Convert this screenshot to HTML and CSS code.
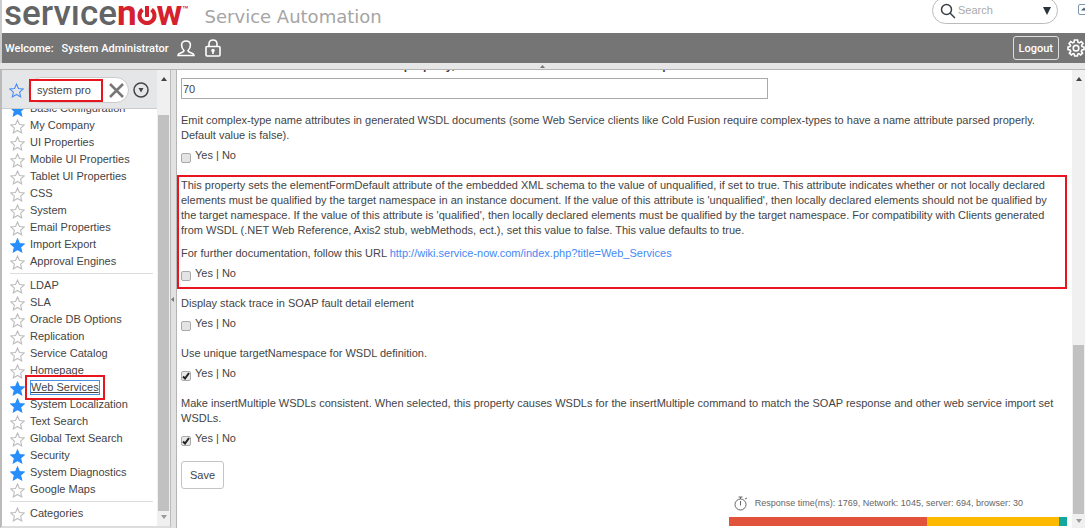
FILE: index.html
```
<!DOCTYPE html>
<html lang="en">
<head>
    <meta charset="UTF-8">
    <meta name="viewport" content="width=device-width, initial-scale=1.0">
    <title>ServiceNow</title>
    <link rel="stylesheet" href="styles.css">
</head>
<body>
    <svg class="defs" width="0" height="0">
        <symbol id="star" viewBox="0 0 14 14">
            <path d="M7 1 L8.8 5.2 L13.3 5.6 L9.9 8.6 L10.9 13 L7 10.7 L3.1 13 L4.1 8.6 L0.7 5.6 L5.2 5.2 Z"/>
        </symbol>
    </svg>

    <header class="banner">
        <div class="logo">servıce<b>n</b><svg class="power" viewBox="0 0 20 20"><path d="M5.500 3.600 A7.500 7.500 0 1 0 14.500 3.600 M10 0 V11"/></svg><b>w</b><small>™</small></div>
        <div class="tagline">Service Automation</div>
        <div class="search">
            <svg width="16" height="16" viewBox="0 0 16 16"><circle cx="6.5" cy="6.5" r="5"/><path d="M10 10 L15 15"/></svg>
            <input type="text" placeholder="Search" aria-label="Search">
            <button class="plain" aria-label="Search options"><svg width="8" height="8" viewBox="0 0 8 8"><path d="M0 0 H8 L4 8 Z"/></svg></button>
        </div>
        <button class="plain collapse" aria-label="Collapse banner"><svg width="7" height="11" viewBox="0 0 7 11"><path d="M7 0.5 H2 Q0.5 0.5 0.5 2 V9 Q0.5 10.5 2 10.5 H7"/><path class="tip" d="M3 6.5 L6 3.5 L7 4.5 V6.5 Z"/></svg></button>
    </header>

    <div class="welcome">
        <span>Welcome:</span>
        <strong>System Administrator</strong>
        <svg width="18" height="17" viewBox="0 0 18 17"><path d="M7 10.5 C4.8 8.6 4.6 6.5 4.6 5 C4.6 2.6 6.4 1 9 1 C11.6 1 13.4 2.6 13.4 5 C13.4 6.5 13.2 8.6 11 10.5 C11 12 12.5 12.4 14.5 13 C16.3 13.6 17 14 17 15.5 H1 C1 14 1.7 13.6 3.5 13 C5.500 12.400 7 12 7 10.500 Z"/></svg>
        <svg width="16" height="18" viewBox="0 0 16 18"><rect x="1" y="7.500" width="14" height="9.500" rx="1"/><path d="M4 7.500 V5 C4 2.500 5.500 1 8 1 C10.500 1 12 2.500 12 5 V7.500 M8 12 V15"/><circle cx="8" cy="11.500" r="1"/></svg>
        <button class="logout">Logout</button>
        <button class="plain gear" aria-label="Settings"><svg width="18" height="18" viewBox="0 0 18 18"><path d="M7.400 1 H10.600 L11 3.300 L12.300 3.900 L14.300 2.600 L16 4.600 L14.600 6.400 L15 7.500 L17 8 V10.500 L14.900 11 L14.300 12.300 L15.600 14.200 L13.700 15.900 L11.900 14.600 L10.800 15 L10.400 17 H7.600 L7.200 15 L6.100 14.600 L4.300 15.900 L2.400 14.200 L3.700 12.300 L3.100 11 L1 10.500 V8 L3 7.500 L3.500 6.400 L2.100 4.600 L3.800 2.600 L5.800 3.900 L7 3.300 Z"/><circle cx="9" cy="9.200" r="2.800"/></svg></button>
    </div>

    <div class="split-row"><svg width="5" height="3" viewBox="0 0 5 3"><path d="M0 3 L2.500 0 L5 3 Z"/></svg></div>

    <div class="workspace">
        <nav class="navigator">
            <div class="nav-body">
                <div class="filter">
                    <svg class="star outline-blue"><use href="#star"/></svg>
                    <div class="filter-box">
                        <input class="marked" type="text" value="system pro" aria-label="Filter navigator">
                        <button class="plain" aria-label="Clear filter"><svg width="15" height="15" viewBox="0 0 15 15"><path d="M1 1 L14 14 M14 1 L1 14"/></svg></button>
                    </div>
                    <button class="plain round" aria-label="Filter options"><svg width="16" height="16" viewBox="0 0 16 16"><circle cx="8" cy="8" r="7"/><path d="M5.500 6 H10.500 L8 10.500 Z"/></svg></button>
                </div>
                <div class="list">
                    <ul class="first">
                        <li><svg class="star on"><use href="#star"/></svg><a href="#">Basic Configuration</a></li>
                        <li><svg class="star"><use href="#star"/></svg><a href="#">My Company</a></li>
                        <li><svg class="star"><use href="#star"/></svg><a href="#">UI Properties</a></li>
                        <li><svg class="star"><use href="#star"/></svg><a href="#">Mobile UI Properties</a></li>
                        <li><svg class="star"><use href="#star"/></svg><a href="#">Tablet UI Properties</a></li>
                        <li><svg class="star"><use href="#star"/></svg><a href="#">CSS</a></li>
                        <li><svg class="star"><use href="#star"/></svg><a href="#">System</a></li>
                        <li><svg class="star"><use href="#star"/></svg><a href="#">Email Properties</a></li>
                        <li><svg class="star on"><use href="#star"/></svg><a href="#">Import Export</a></li>
                        <li><svg class="star"><use href="#star"/></svg><a href="#">Approval Engines</a></li>
                    </ul>
                    <ul>
                        <li><svg class="star"><use href="#star"/></svg><a href="#">LDAP</a></li>
                        <li><svg class="star"><use href="#star"/></svg><a href="#">SLA</a></li>
                        <li><svg class="star"><use href="#star"/></svg><a href="#">Oracle DB Options</a></li>
                        <li><svg class="star"><use href="#star"/></svg><a href="#">Replication</a></li>
                        <li><svg class="star"><use href="#star"/></svg><a href="#">Service Catalog</a></li>
                        <li><svg class="star"><use href="#star"/></svg><a href="#">Homepage</a></li>
                        <li><svg class="star on"><use href="#star"/></svg><a href="#" class="current">Web Services</a></li>
                        <li><svg class="star on"><use href="#star"/></svg><a href="#">System Localization</a></li>
                        <li><svg class="star"><use href="#star"/></svg><a href="#">Text Search</a></li>
                        <li><svg class="star"><use href="#star"/></svg><a href="#">Global Text Search</a></li>
                        <li><svg class="star on"><use href="#star"/></svg><a href="#">Security</a></li>
                        <li><svg class="star on"><use href="#star"/></svg><a href="#">System Diagnostics</a></li>
                        <li><svg class="star"><use href="#star"/></svg><a href="#">Google Maps</a></li>
                    </ul>
                    <ul>
                        <li><svg class="star"><use href="#star"/></svg><a href="#">Categories</a></li>
                    </ul>
                </div>
            </div>
            <div class="scrollbar nav-scroll">
                <svg width="6" height="4" viewBox="0 0 6 4"><path d="M0 4 L3 0 L6 4 Z"/></svg>
                <div class="thumb"></div>
                <svg class="end" width="6" height="4" viewBox="0 0 6 4"><path d="M0 0 L3 4 L6 0 Z"/></svg>
            </div>
        </nav>

        <div class="split-col"><svg width="3" height="5" viewBox="0 0 3 5"><path d="M3 0 L0 2.500 L3 5 Z"/></svg></div>

        <main class="content">
            <form class="properties">
                <label class="cut" for="limit">Number of seconds the client waits on property, or the connection is closed with response</label>
                <input class="limit" id="limit" type="text" value="70">

                <div class="property">
                    <p>Emit complex-type name attributes in generated WSDL documents (some Web Service clients like Cold Fusion require complex-types to have a name attribute parsed properly. Default value is false).</p>
                    <label class="check"><input type="checkbox"> Yes | No</label>
                </div>
                <div class="property marked">
                    <p>This property sets the elementFormDefault attribute of the embedded XML schema to the value of unqualified, if set to true. This attribute indicates whether or not locally declared elements must be qualified by the target namespace in an instance document. If the value of this attribute is 'unqualified', then locally declared elements should not be qualified by the target namespace. If the value of this attribute is 'qualified', then locally declared elements must be qualified by the target namespace. For compatibility with Clients generated from WSDL (.NET Web Reference, Axis2 stub, webMethods, ect.), set this value to false. This value defaults to true.</p>
                    <p>For further documentation, follow this URL <a href="http://wiki.service-now.com/index.php?title=Web_Services">http://wiki.service-now.com/index.php?title=Web_Services</a></p>
                    <label class="check"><input type="checkbox"> Yes | No</label>
                </div>
                <div class="property">
                    <p>Display stack trace in SOAP fault detail element</p>
                    <label class="check"><input type="checkbox"> Yes | No</label>
                </div>
                <div class="property">
                    <p>Use unique targetNamespace for WSDL definition.</p>
                    <label class="check"><input type="checkbox" checked> Yes | No</label>
                </div>
                <div class="property">
                    <p>Make insertMultiple WSDLs consistent. When selected, this property causes WSDLs for the insertMultiple command to match the SOAP response and other web service import set WSDLs.</p>
                    <label class="check"><input type="checkbox" checked> Yes | No</label>
                </div>
                <button class="save" type="button">Save</button>

                <div class="timing">
                    <div class="timing-text">
                        <svg width="14" height="15" viewBox="0 0 14 15"><circle cx="6.500" cy="8.500" r="5.500"/><path d="M6.500 5 V9.500 M4.500 1 H8.500 M6.500 1 V3 M11 3 L13 2"/></svg>
                        <span>Response time(ms): 1769, Network: 1045, server: 694, browser: 30</span>
                    </div>
                    <div class="timing-bar">
                        <i class="network"></i><i class="server"></i><i class="browser"></i>
                    </div>
                </div>
            </form>
            <div class="scrollbar main-scroll">
                <svg width="6" height="4" viewBox="0 0 6 4"><path d="M0 4 L3 0 L6 4 Z"/></svg>
                <div class="thumb"></div>
                <svg class="end" width="6" height="4" viewBox="0 0 6 4"><path d="M0 0 L3 4 L6 0 Z"/></svg>
            </div>
        </main>
    </div>
</body>
</html>
```
FILE: styles.css
```
* {
    box-sizing: border-box;
}

body {
    margin: 0;
    padding-right: 5px;
    height: 100vh;
    display: flex;
    flex-direction: column;
    overflow: hidden;
    font-family: "Liberation Sans", Arial, sans-serif;
    font-size: 11px;
    line-height: 15px;
    color: #444;
    background: #fff;
}

svg {
    flex: none;
    display: block;
}

input, button {
    font: inherit;
    color: inherit;
    margin: 0;
}

a {
    color: #4489f4;
    text-decoration: none;
}

p, ul {
    margin: 0;
    padding: 0;
    list-style: none;
}

.defs {
    position: absolute;
}

.plain {
    padding: 0;
    border: 0;
    background: none;
}

/* Banner */
.banner {
    display: flex;
    align-items: center;
    height: 33px;
    flex: none;
    padding-left: 2px;
    border-left: 2px solid #ccc;
}

.logo {
    display: flex;
    align-items: center;
    margin-bottom: 5px;
    font-family: Roboto, sans-serif;
    font-size: 35px;
    font-weight: 500;
    line-height: 28px;
    color: #636466;
}

.logo b {
    color: #d5202e;
}

.logo small {
    align-self: flex-start;
    margin-top: 2px;
    font-size: 10px;
    line-height: 15px;
    color: #d5202e;
}

.power {
    width: 20px;
    height: 20px;
    margin-top: 4px;
    fill: none;
    stroke: #d5202e;
    stroke-width: 4;
}

.tagline {
    margin-left: 16px;
    font-family: "DejaVu Sans", sans-serif;
    font-size: 18px;
    color: #a5a5a5;
}

.search {
    display: flex;
    align-items: center;
    gap: 2px;
    width: 126px;
    height: 27px;
    margin: 0 20px 12px auto;
    padding: 0 6px 0 7px;
    border: 1px solid #bbb;
    border-radius: 14px;
}

.search > svg {
    fill: none;
    stroke: #3a4246;
    stroke-width: 1.5;
}

.search input {
    flex: 1;
    min-width: 0;
    padding: 0;
    border: 0;
    outline: 0;
}

.search input::placeholder {
    color: #aaa;
}

.search button {
    fill: #29343a;
}

.collapse {
    margin-bottom: 14px;
    fill: none;
    stroke: #7d96ad;
}

.collapse .tip {
    fill: #4a6178;
    stroke: none;
}

/* Welcome bar */
.welcome {
    display: flex;
    align-items: center;
    gap: 8px;
    height: 30px;
    flex: none;
    padding-left: 3px;
    border-left: 2px solid #ccc;
    color: #fff;
    background: #757575;
    font-family: Roboto, sans-serif;
    font-weight: 500;
}

.welcome strong {
    font-weight: 500;
}

.welcome svg {
    fill: none;
    stroke: #fff;
    stroke-width: 1.6;
    margin-right: 2px;
}

.logout {
    margin-left: auto;
    height: 24px;
    padding: 0 5px;
    border: 1px solid #ddd;
    border-radius: 3px;
    background: none;
}

.gear svg {
    margin: 0;
}

/* Splitters */
.split-row {
    display: flex;
    justify-content: center;
    align-items: center;
    height: 7px;
    flex: none;
    background: #e6e6e6;
    border-bottom: 1px solid #b5b5b5;
    fill: #777;
}

.split-col {
    display: flex;
    align-items: center;
    width: 6px;
    flex: none;
    background: #e2e2e2;
    border-right: 1px solid #b5b5b5;
    fill: #777;
}

.workspace {
    display: flex;
    flex: 1;
    min-height: 0;
}

/* Navigator */
.navigator {
    display: flex;
    width: 171px;
    flex: none;
    border-left: 2px solid #bbb;
    border-right: 1px solid #bbb;
    border-bottom: 2px solid #ddd;
}

.nav-body {
    display: flex;
    flex-direction: column;
    flex: 1;
    min-width: 0;
}

.filter {
    display: flex;
    align-items: center;
    height: 39px;
    flex: none;
    gap: 4px;
    padding: 2px 8px 0 7px;
    background: #e4e6e8;
    border-bottom: 1px solid #ccc;
}

.filter-box {
    display: flex;
    align-items: center;
    justify-content: space-between;
    flex: 1;
    min-width: 0;
    height: 26px;
    padding-right: 4px;
    border: 1px solid #ccc;
    border-radius: 13px;
    background: #fff;
}

.filter-box input {
    width: 74px;
    height: 23px;
    padding: 0 6px;
    outline: 0;
    background: #fff;
}

.filter-box button {
    stroke: #777;
    stroke-width: 2.5;
}

.round {
    fill: none;
    stroke: #444;
    stroke-width: 1.5;
}

.round path {
    fill: #444;
    stroke: none;
}

.list {
    flex: 1;
    min-height: 0;
    overflow: hidden;
    padding: 0 4px 0 8px;
}

.list ul + ul {
    margin-top: 3px;
    padding-top: 3px;
    border-top: 1px solid #ddd;
}

.first {
    margin-top: -9px;
}

.list li {
    display: flex;
    align-items: center;
    gap: 5px;
    height: 17px;
}

.list a {
    color: #444;
}

.star {
    width: 15px;
    height: 15px;
    fill: none;
    stroke: #bbb;
    overflow: visible;
}

.list .star {
    margin-top: 2px;
}

.star.on {
    fill: #278efc;
    stroke: #278efc;
}

.star.outline-blue {
    stroke: #4a8cf7;
}

.list .current {
    border: 1px solid #4a90e2;
    line-height: 13px;
    text-decoration: underline;
    outline: 2px solid #e8141e;
    outline-offset: 3px;
}

.marked,
.properties .marked {
    border: 2px solid #e8141e;
}

/* Scrollbars */
.scrollbar {
    display: flex;
    flex-direction: column;
    align-items: center;
    flex: none;
    width: 13px;
    padding: 7px 0;
    background: #f0f0f0;
    fill: #444;
}

.scrollbar .thumb {
    width: 11px;
    background: #c1c1c1;
}

.scrollbar .end {
    fill: #999;
}

.nav-scroll .thumb {
    flex: 1;
    margin: 34px 0 4px;
}

.main-scroll {
    padding-bottom: 5px;
}

.main-scroll .thumb {
    height: 38%;
    margin: auto 0 5px;
}

/* Properties form */
.content {
    display: flex;
    flex: 1;
    min-width: 0;
}

.properties {
    display: flex;
    flex-direction: column;
    flex: 1;
    min-width: 0;
    overflow: hidden;
    margin-right: 5px;
}

.cut {
    height: 15px;
    flex: none;
    margin: -12px 4px 5px;
    font-size: 12px;
    font-weight: bold;
    white-space: nowrap;
}

.limit {
    width: 66%;
    height: 21px;
    flex: none;
    margin: 0 4px 11px;
    padding: 0 1px;
    border: 1px solid #aaa;
}

.property {
    flex: none;
    margin-bottom: 4px;
    padding: 1px 2px 6px;
    border: 2px solid transparent;
}

.property p {
    padding-right: 7px;
}

.property p + p {
    margin-top: 8px;
}

.check {
    display: flex;
    align-items: center;
    gap: 4px;
    height: 15px;
    margin-top: 5px;
}

.check input {
    appearance: none;
    width: 10px;
    height: 10px;
    margin-top: 4px;
    border: 1px solid #aaa;
    border-radius: 2px;
    background: #e4e4e4;
}

.check input:checked {
    background: #e8e8e8 url("data:image/svg+xml,%3Csvg xmlns='http://www.w3.org/2000/svg' viewBox='0 0 8 8'%3E%3Cpath d='M1 4.500 L3 6.500 L7 1' fill='none' stroke='%23222' stroke-width='2'/%3E%3C/svg%3E");
}

.save {
    align-self: flex-start;
    height: 28px;
    flex: none;
    margin: 3px 4px 0;
    padding: 0 8px;
    border: 1px solid #c4c4c4;
    border-radius: 3px;
    background: #fff;
}

/* Response time */
.timing {
    align-self: flex-end;
    width: 38%;
    margin: auto 0 2px;
}

.timing-text {
    display: flex;
    align-items: center;
    gap: 7px;
    padding-left: 5px;
    margin-bottom: 6px;
    font-size: 9px;
    color: #666;
}

.timing-text svg {
    fill: none;
    stroke: #666;
}

.timing-bar {
    display: flex;
    height: 9px;
}

.network {
    flex: 1045;
    background: #e2533c;
}

.server {
    flex: 694;
    background: #ffba00;
}

.browser {
    flex: 30;
    min-width: 8px;
    background: #12a8a0;
}
```
